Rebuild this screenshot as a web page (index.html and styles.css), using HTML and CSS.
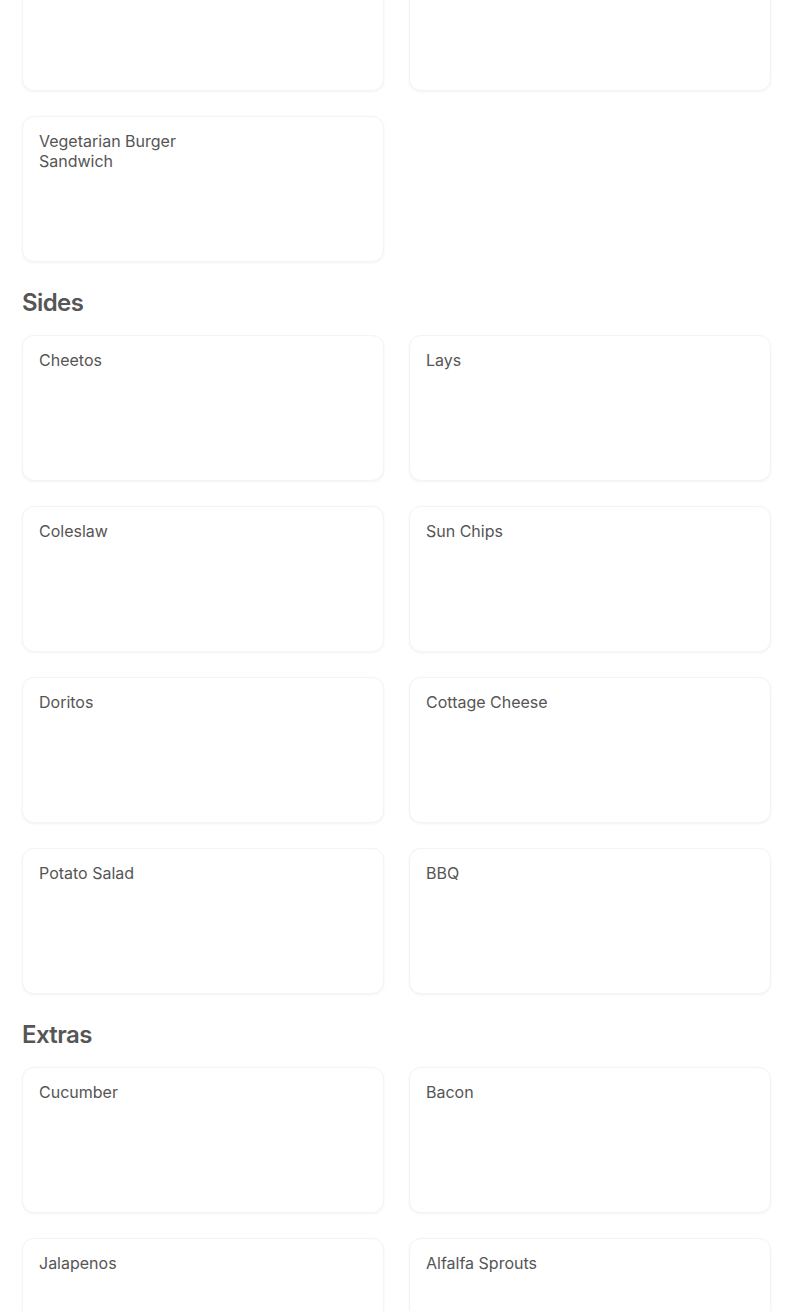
FILE: index.html
```html
<!DOCTYPE html>
<html lang="en">
<head>
<meta charset="utf-8">
<title>Menu</title>
<link rel="stylesheet" href="styles.css">
</head>
<body>
<main class="menu">
  <section class="section">
    <div class="grid">
      <div class="card"><p class="name">Chicken Burger Sandwich</p></div>
      <div class="card"><p class="name">Turkey Club Sandwich</p></div>
      <div class="card"><p class="name">Vegetarian Burger Sandwich</p></div>
    </div>
  </section>
  <section class="section">
    <h2 class="heading">Sides</h2>
    <div class="grid">
      <div class="card"><p class="name">Cheetos</p></div>
      <div class="card"><p class="name">Lays</p></div>
      <div class="card"><p class="name">Coleslaw</p></div>
      <div class="card"><p class="name">Sun Chips</p></div>
      <div class="card"><p class="name">Doritos</p></div>
      <div class="card"><p class="name">Cottage Cheese</p></div>
      <div class="card"><p class="name">Potato Salad</p></div>
      <div class="card"><p class="name">BBQ</p></div>
    </div>
  </section>
  <section class="section">
    <h2 class="heading">Extras</h2>
    <div class="grid">
      <div class="card"><p class="name">Cucumber</p></div>
      <div class="card"><p class="name">Bacon</p></div>
      <div class="card"><p class="name">Jalapenos</p></div>
      <div class="card"><p class="name">Alfalfa Sprouts</p></div>
    </div>
  </section>
</main>
</body>
</html>
```

FILE: styles.css
```css
html, body {
  margin: 0;
  padding: 0;
  background: #ffffff;
}
body {
  font-family: Inter, "Noto Sans", sans-serif;
  color: #555555;
  overflow: hidden;
}
.menu {
  margin-top: -55px;
  padding: 0 33px 0 22px;
  display: flex;
  flex-direction: column;
  gap: 25px;
}
.section {
  display: flex;
  flex-direction: column;
}
.heading {
  margin: 0 0 16px 0;
  font-size: 24px;
  line-height: 32px;
  font-weight: 600;
  letter-spacing: -0.6px;
  color: #565656;
}
.grid {
  display: grid;
  grid-template-columns: 1fr 1fr;
  column-gap: 25px;
  row-gap: 25px;
}
.card {
  height: 146px;
  box-sizing: border-box;
  padding: 14px 16px 12px 16px;
  background: #ffffff;
  border: 1px solid #f4f4f4;
  border-radius: 12px;
  box-shadow: 0 1px 3px rgba(0, 0, 0, 0.05);
}
.name {
  margin: 0;
  max-width: 180px;
  font-size: 16px;
  line-height: 20px;
  font-weight: 400;
  color: #555555;
}
```
